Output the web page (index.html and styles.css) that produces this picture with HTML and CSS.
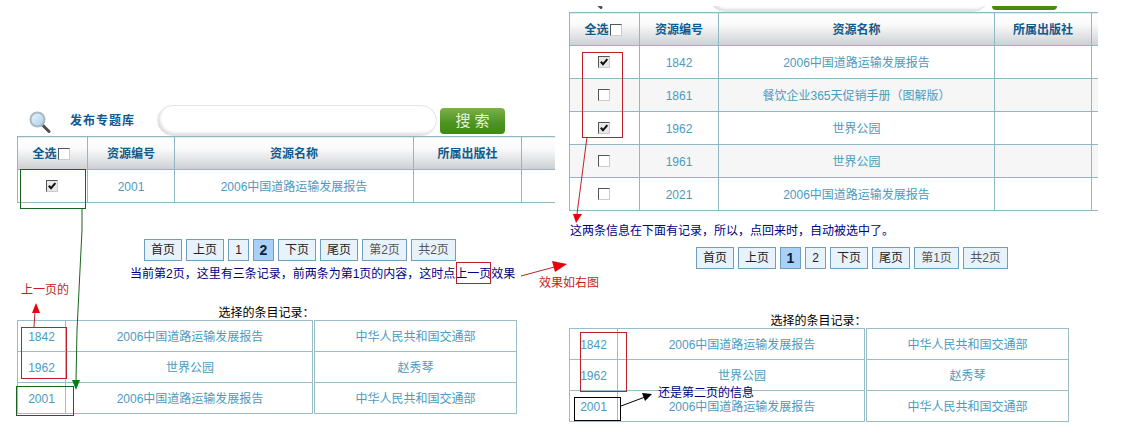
FILE: index.html
```html
<!DOCTYPE html>
<html lang="zh-CN">
<head>
<meta charset="utf-8">
<title>发布专题库</title>
<link rel="stylesheet" href="styles.css">
</head>
<body>
<svg class="defs" width="0" height="0" aria-hidden="true">
  <symbol id="tick" viewBox="0 0 11 11"><path d="M2 5.2 4.4 8 9.2 2.4" fill="none" stroke="#111" stroke-width="2.2"/></symbol>
  <linearGradient id="lens" x1="0" y1="0" x2="1" y2="1"><stop offset="0" stop-color="#eef7fc"/><stop offset="1" stop-color="#a5cfe6"/></linearGradient>
  <symbol id="glass" viewBox="0 0 22 22">
    <path d="M13.5 14 20 20.5" stroke="#4a4f55" stroke-width="3" stroke-linecap="round"/>
    <circle cx="8.5" cy="8.5" r="7" fill="url(#lens)" stroke="#a9b8c2" stroke-width="2"/>
  </symbol>
</svg>

<main class="canvas">
  <section class="panel panel-left">
    <div class="search">
      <svg class="search-icon"><use href="#glass"/></svg>
      <span class="search-title">发布专题库</span>
      <span class="search-input"></span>
      <span class="search-btn">搜 索</span>
    </div>
    <table class="grid grid-left">
      <colgroup><col class="l1"><col class="l2"><col class="l3"><col class="l4"><col></colgroup>
      <tr><th>全选<span class="cb"></span></th><th>资源编号</th><th>资源名称</th><th>所属出版社</th><th></th></tr>
      <tr><td><span class="cb on"><svg><use href="#tick"/></svg></span></td><td>2001</td><td>2006中国道路运输发展报告</td><td></td><td></td></tr>
    </table>
    <nav class="pager">
      <a>首页</a><a>上页</a><a class="num">1</a><a class="num cur">2</a><a>下页</a><a>尾页</a><a class="info">第2页</a><a class="info">共2页</a>
    </nav>
    <p class="note note-left">当前第2页，这里有三条记录，前两条为第1页的内容，这时点上一页效果</p>
    <p class="caption">选择的条目记录：</p>
    <table class="picked">
      <colgroup><col class="p1"><col class="p2"><col></colgroup>
      <tr><td>1842</td><td class="dbl">2006中国道路运输发展报告</td><td>中华人民共和国交通部</td></tr>
      <tr><td>1962</td><td class="dbl">世界公园</td><td>赵秀琴</td></tr>
      <tr><td>2001</td><td class="dbl">2006中国道路运输发展报告</td><td>中华人民共和国交通部</td></tr>
    </table>
  </section>

  <section class="panel panel-right">
    <div class="search-clip">
      <div class="search">
        <svg class="search-icon"><use href="#glass"/></svg>
        <span class="search-title"></span>
        <span class="search-input"></span>
        <span class="search-btn"></span>
      </div>
    </div>
    <table class="grid grid-right">
      <colgroup><col class="r1"><col class="r2"><col class="r3"><col class="r4"><col></colgroup>
      <tr><th>全选<span class="cb"></span></th><th>资源编号</th><th>资源名称</th><th>所属出版社</th><th></th></tr>
      <tr><td><span class="cb on"><svg><use href="#tick"/></svg></span></td><td>1842</td><td>2006中国道路运输发展报告</td><td></td><td></td></tr>
      <tr><td><span class="cb"></span></td><td>1861</td><td>餐饮企业365天促销手册（图解版）</td><td></td><td></td></tr>
      <tr><td><span class="cb on"><svg><use href="#tick"/></svg></span></td><td>1962</td><td>世界公园</td><td></td><td></td></tr>
      <tr><td><span class="cb"></span></td><td>1961</td><td>世界公园</td><td></td><td></td></tr>
      <tr><td><span class="cb"></span></td><td>2021</td><td>2006中国道路运输发展报告</td><td></td><td></td></tr>
    </table>
    <p class="note note-right">这两条信息在下面有记录，所以，点回来时，自动被选中了。</p>
    <nav class="pager pager-right">
      <a>首页</a><a>上页</a><a class="num cur">1</a><a class="num">2</a><a>下页</a><a>尾页</a><a class="info">第1页</a><a class="info">共2页</a>
    </nav>
    <p class="caption caption-right">选择的条目记录：</p>
    <table class="picked">
      <colgroup><col class="p1"><col class="p2"><col></colgroup>
      <tr><td>1842</td><td class="dbl">2006中国道路运输发展报告</td><td>中华人民共和国交通部</td></tr>
      <tr><td>1962</td><td class="dbl">世界公园</td><td>赵秀琴</td></tr>
      <tr><td>2001</td><td class="dbl">2006中国道路运输发展报告</td><td>中华人民共和国交通部</td></tr>
    </table>
  </section>

  <svg class="marks" width="1121" height="444" viewBox="0 0 1121 444" aria-hidden="true">
    <g class="red">
      <rect x="456.5" y="262.5" width="34" height="21"/>
      <rect x="21.5" y="327.5" width="45" height="51"/>
      <rect x="582.5" y="52.5" width="40" height="85"/>
      <rect x="580.5" y="332.5" width="46" height="59"/>
      <path d="M521 276 558 266"/>
      <path d="M34 327 35 312"/>
      <path d="M587 137 577 214"/>
    </g>
    <path class="red-fill" d="M552 261 567 264 555 272Z"/>
    <path class="red-fill" d="M36 303 32 313 40 313Z"/>
    <path class="red-fill" d="M573 214 582 214 576 223Z"/>
    <g class="green">
      <rect x="20.5" y="169.5" width="65" height="39"/>
      <rect x="16.5" y="386.5" width="57" height="29"/>
      <path d="M82 208 82 230 77 330 76 381"/>
    </g>
    <path class="green-fill" d="M72 380 80 380 76 390Z"/>
    <g class="black">
      <rect x="574.5" y="397.5" width="46" height="23"/>
      <path d="M621 406 645 397"/>
    </g>
    <path class="black-fill" d="M652 394 642 393 645 401Z"/>
  </svg>

  <span class="tag tag-prev">上一页的</span>
  <span class="tag tag-effect">效果如右图</span>
  <span class="tag tag-second">还是第二页的信息</span>
</main>
</body>
</html>
```

FILE: styles.css
```css
* { box-sizing: border-box; }

html, body { margin: 0; padding: 0; background: #fff; }

body {
  font: 12px/16px "Liberation Sans", "Noto Sans CJK SC", sans-serif;
  color: #000;
}

.defs { position: absolute; }

.canvas {
  position: relative;
  display: flex;
  width: 1121px;
  height: 444px;
  overflow: hidden;
}

.panel { flex: none; }
.panel-left { width: 569px; padding: 105px 0 0 17px; }
.panel-right { width: 552px; padding-top: 6px; }

/* search bar */
.search {
  display: flex;
  align-items: center;
  flex: none;
  height: 31px;
  width: 538px;
}
.search-icon { flex: none; width: 22px; height: 22px; margin: 2px 0 0 12px; }
.search-title {
  flex: none;
  width: 87px;
  margin-left: 19px;
  font-weight: bold;
  letter-spacing: 1px;
  color: #0f5a8e;
}
.search-input {
  flex: none;
  width: 280px;
  height: 31px;
  border: 1px solid #e4e4e4;
  border-radius: 16px;
  background: #fff;
  box-shadow: inset 2px -2px 3px #ddd;
}
.search-btn {
  flex: none;
  width: 65px;
  height: 26px;
  margin-left: 3px;
  border-radius: 4px;
  background: linear-gradient(#7eb04d, #4f9520 55%, #3f8a14);
  color: #e6f3dc;
  font-size: 15px;
  line-height: 26px;
  text-align: center;
}
.search-clip {
  display: flex;
  flex-direction: column;
  justify-content: flex-end;
  height: 6px;
  overflow: hidden;
}

/* data tables */
table {
  border-collapse: collapse;
  table-layout: fixed;
}
.grid th, .grid td, .picked td {
  padding: 1px 0 0;
  text-align: center;
  overflow: hidden;
  white-space: nowrap;
}
.grid { border-left: 1px solid #8fb9c2; }
.grid th, .grid td {
  height: 33px;
  border: 1px solid #8fb9c2;
}
.grid tr > :last-child { border-right: 0; }
.grid th {
  padding-top: 2px;
  font-weight: bold;
  color: #0f5a8e;
  background: linear-gradient(#fff, #fafafa 35%, #ccd0d2);
}
.grid th:first-child { padding-right: 3px; }
.grid td, .picked td { color: #4b9bc0; }
.grid-right tr:nth-child(odd) td { background: #f6f6f6; }
.grid-right tr:nth-child(n+6) td { background: #fff; }

.grid-left { width: 538px; }
.l1 { width: 70px; } .l2 { width: 87px; } .l3 { width: 239px; } .l4 { width: 108px; }
.grid-right { width: 529px; }
.r1 { width: 70px; } .r2 { width: 79px; } .r3 { width: 276px; } .r4 { width: 97px; }

.picked { width: 500px; }
.picked td {
  height: 31px;
  border: 1px solid #9bbdc8;
}
.picked td.dbl { padding-left: 2px; border-right: 3px double #9bbdc8; }
.p1 { width: 48px; } .p2 { width: 248px; }

/* checkboxes */
.cb {
  display: inline-block;
  vertical-align: middle;
  width: 12px;
  height: 12px;
  margin: -2px 0 0 1px;
  border: 1px solid;
  border-color: #555 #ccc #ccc #555;
  background: #fff;
}
td .cb { margin-left: -1px; }
.cb.on { background: #e8e8e8; }
.cb svg { display: block; width: 10px; height: 10px; }

/* pager */
.pager {
  display: flex;
  gap: 4px;
  margin-top: 36px;
  margin-left: 127px;
}
.pager-right { margin-top: 9px; }
.pager a {
  width: 38px;
  height: 22px;
  border: 1px solid #6f9fbe;
  background: #e8f2fb;
  color: #222;
  line-height: 20px;
  text-align: center;
}
.pager a.num { width: 21px; }
.pager a.cur { background: #a9d1f7; font-weight: bold; font-size: 14px; color: #102030; }
.pager a.info { width: 45px; color: #555; }

/* notes */
.note, .caption { height: 16px; line-height: 18px; }
.note { margin: 0; color: #00007f; white-space: nowrap; }
.note-left { margin: 4px 0 0 113px; }
.note-right { margin: 11px 0 0 1px; }
.caption { width: 499px; margin: 23px 0 0; text-align: center; }
.caption-right { margin-top: 43px; }

/* hand drawn annotations */
.marks { position: absolute; left: 0; top: 0; pointer-events: none; }
.marks g { fill: none; stroke-width: 1; }
.red { stroke: #c01f2a; }
.green { stroke: #17651a; }
.black { stroke: #000; }
.red-fill { fill: #e8000f; }
.green-fill { fill: #0b7a16; }
.black-fill { fill: #000; }

.tag { position: absolute; white-space: nowrap; }
.tag-prev { left: 21px; top: 282px; color: #c81c1c; }
.tag-effect { left: 539px; top: 275px; color: #c81c1c; }
.tag-second { left: 658px; top: 385px; color: #00007f; }
```
